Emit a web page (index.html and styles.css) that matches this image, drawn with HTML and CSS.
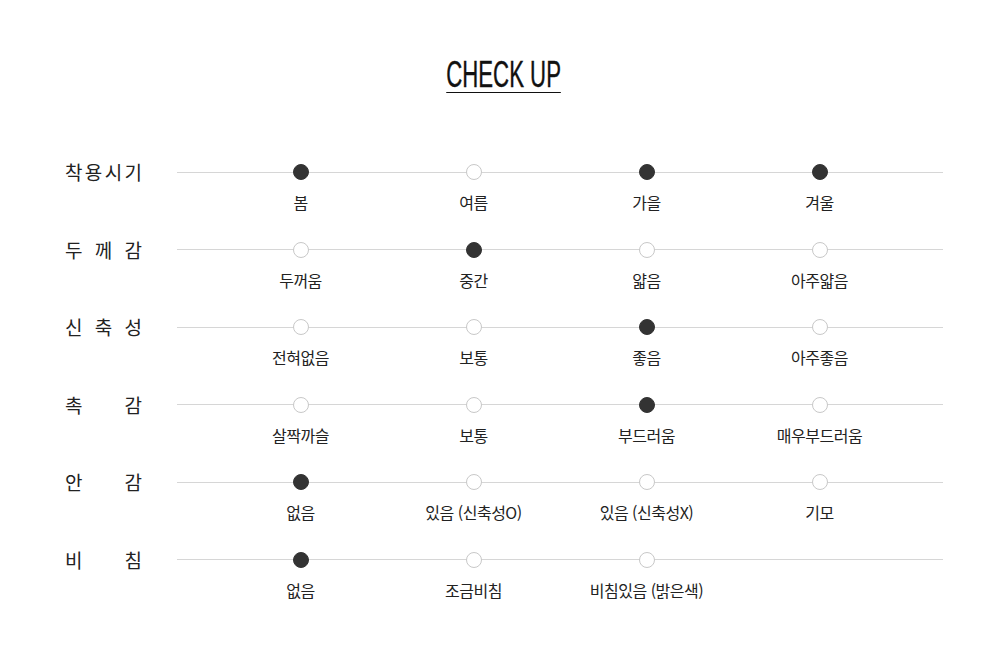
FILE: index.html
```html
<!DOCTYPE html>
<html lang="ko">
<head>
<meta charset="utf-8">
<link rel="stylesheet" href="styles.css">
</head>
<body>
<div class="page">
  <div class="title-wrap"><h1 class="title">CHECK UP</h1></div>
  <div class="table">
    <div class="row">
      <div class="label"><span>착</span><span>용</span><span>시</span><span>기</span></div>
      <div class="track">
        <div class="opt on"><i class="dot"></i><span>봄</span></div>
        <div class="opt"><i class="dot"></i><span>여름</span></div>
        <div class="opt on"><i class="dot"></i><span>가을</span></div>
        <div class="opt on"><i class="dot"></i><span>겨울</span></div>
      </div>
    </div>
    <div class="row">
      <div class="label"><span>두</span><span>께</span><span>감</span></div>
      <div class="track">
        <div class="opt"><i class="dot"></i><span>두꺼움</span></div>
        <div class="opt on"><i class="dot"></i><span>중간</span></div>
        <div class="opt"><i class="dot"></i><span>얇음</span></div>
        <div class="opt"><i class="dot"></i><span>아주얇음</span></div>
      </div>
    </div>
    <div class="row">
      <div class="label"><span>신</span><span>축</span><span>성</span></div>
      <div class="track">
        <div class="opt"><i class="dot"></i><span>전혀없음</span></div>
        <div class="opt"><i class="dot"></i><span>보통</span></div>
        <div class="opt on"><i class="dot"></i><span>좋음</span></div>
        <div class="opt"><i class="dot"></i><span>아주좋음</span></div>
      </div>
    </div>
    <div class="row">
      <div class="label"><span>촉</span><span>감</span></div>
      <div class="track">
        <div class="opt"><i class="dot"></i><span>살짝까슬</span></div>
        <div class="opt"><i class="dot"></i><span>보통</span></div>
        <div class="opt on"><i class="dot"></i><span>부드러움</span></div>
        <div class="opt"><i class="dot"></i><span>매우부드러움</span></div>
      </div>
    </div>
    <div class="row">
      <div class="label"><span>안</span><span>감</span></div>
      <div class="track">
        <div class="opt on"><i class="dot"></i><span>없음</span></div>
        <div class="opt"><i class="dot"></i><span>있음 (신축성O)</span></div>
        <div class="opt"><i class="dot"></i><span>있음 (신축성X)</span></div>
        <div class="opt"><i class="dot"></i><span>기모</span></div>
      </div>
    </div>
    <div class="row">
      <div class="label"><span>비</span><span>침</span></div>
      <div class="track">
        <div class="opt on"><i class="dot"></i><span>없음</span></div>
        <div class="opt"><i class="dot"></i><span>조금비침</span></div>
        <div class="opt"><i class="dot"></i><span>비침있음 (밝은색)</span></div>
        <div class="opt empty"></div>
      </div>
    </div>
  </div>
</div>
</body>
</html>
```

FILE: styles.css
```css
* { box-sizing: border-box; }
html, body { margin: 0; padding: 0; background: #fff; }
body {
  font-family: "Noto Sans CJK KR", "Noto Sans", sans-serif;
  color: #222;
}
.page {
  width: 878px;
  margin-left: 65px;
  padding-top: 56px;
}
.title-wrap {
  display: flex;
  justify-content: center;
  height: 108px;
}
.title {
  margin: 0;
  font-family: "Liberation Sans Narrow", "Liberation Sans", sans-serif;
  font-weight: 400;
  font-size: 37px;
  line-height: 37px;
  color: #111;
  height: 37px;
  border-bottom: 1.5px solid #111;
  transform: scaleX(0.6);
  transform-origin: center top;
  -webkit-text-stroke: 0.4px #111;
  align-self: flex-start;
}
.table { display: flex; flex-direction: column; }
.row {
  display: grid;
  grid-template-columns: 112px 766px;
  height: 77.6px;
}
.label {
  width: 77px;
  display: flex;
  justify-content: space-between;
  font-size: 19px;
  line-height: 20px;
  color: #222;
  margin-top: -2px;
}
.track {
  position: relative;
  display: grid;
  grid-template-columns: repeat(4, 173px);
  padding: 0 37px;
  align-items: start;
}
.track::before {
  content: "";
  position: absolute;
  left: 0;
  right: 0;
  top: 7.5px;
  height: 1px;
  background: #d6d6d6;
}
.opt {
  position: relative;
  display: flex;
  flex-direction: column;
  align-items: center;
}
.dot {
  display: block;
  width: 16px;
  height: 16px;
  border-radius: 50%;
  background: #fff;
  border: 1px solid #c8c8c8;
}
.opt.on .dot {
  background: #333;
  border-color: #333;
}
.opt span {
  margin-top: 11px;
  font-size: 16px;
  line-height: 22px;
  letter-spacing: -0.5px;
  color: #222;
  white-space: nowrap;
}
```
